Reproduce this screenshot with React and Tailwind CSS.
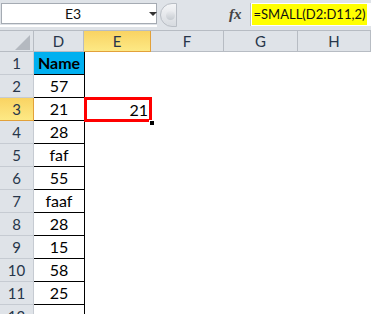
import React from "react";

const rows = [
  { n: 1, v: "Name" },
  { n: 2, v: "57" },
  { n: 3, v: "21" },
  { n: 4, v: "28" },
  { n: 5, v: "faf" },
  { n: 6, v: "55" },
  { n: 7, v: "faaf" },
  { n: 8, v: "28" },
  { n: 9, v: "15" },
  { n: 10, v: "58" },
  { n: 11, v: "25" },
  { n: 12, v: "" },
];

const font = { fontFamily: "Lato, 'Open Sans', sans-serif" };

export default function App() {
  return (
    <div className="w-[371px] h-[314px] overflow-hidden bg-white text-black" style={font}>
      {/* formula bar */}
      <div className="h-[30px] bg-[#dfe3e8] flex items-start relative">
        <div className="mt-[3px] ml-[1px] w-[156px] h-[21px] bg-white border border-[#a5abb3] flex items-center relative">
          <span className="absolute left-[63px] top-[1px] text-[14px] leading-[18px] text-[#111]">E3</span>
          <span className="absolute left-[147px] top-[8px] w-0 h-0 border-l-[4px] border-r-[4px] border-t-[4px] border-l-transparent border-r-transparent border-t-[#333]"></span>
        </div>
        <div className="absolute left-0 top-[25px] w-[157px] h-[2px] bg-white"></div>
        <div className="mt-[3px] ml-[3px] w-[17px] h-[24px] rounded-l-full border border-[#b9bec5] bg-gradient-to-b from-[#f4f5f7] to-[#d7dbe0] flex items-center justify-center">
          <div className="w-[9px] h-[9px] rounded-full bg-gradient-to-b from-[#e9ebee] to-[#c6cbd1] ml-[3px]"></div>
        </div>
        <div className="w-[52px]"></div>
        <span className="mt-[6px] text-[15px] leading-[16px] italic font-bold text-[#444]" style={{ fontFamily: "'Liberation Serif', serif" }}>fx</span>
        <div className="ml-[8px] mt-[3px] flex-1 h-[23px] bg-white border-l border-[#b9bec5] flex items-center">
          <span className="ml-[1px] bg-[#ffff00] h-[21px] px-[2px] text-[13px] leading-[21px] text-[#111]">=SMALL(D2:D11,2)</span>
        </div>
      </div>
      {/* column header */}
      <div className="flex h-[22px] border-t border-[#b7bcc3]">
        <div className="w-[34px] bg-[#dfe3e8] border-r border-b border-[#b7bcc3] relative">
          <svg className="absolute left-[15px] top-[4px]" width="15" height="15" viewBox="0 0 15 15"><polygon points="15,0 15,15 0,15" fill="#b4b9c0" /></svg>
        </div>
        <Head w="w-[50px]" t="D" />
        <div className="w-[67px] border-b border-r border-[#e2a13a] bg-gradient-to-b from-[#f9d362] to-[#fde985] flex items-center justify-center text-[15px] text-[#27364a]">E</div>
        <Head w="w-[73px]" t="F" />
        <Head w="w-[74px]" t="G" />
        <Head w="w-[73px]" t="H" />
      </div>
      {rows.map((r) => (
        <div key={r.n} className="flex h-[23px]">
          {r.n === 3 ? (
            <div className="w-[34px] shrink-0 border-r border-b border-[#e2a13a] bg-gradient-to-b from-[#f9d362] to-[#fde985] flex items-center justify-center text-[15px] text-[#27364a]">3</div>
          ) : (
            <div className="w-[34px] shrink-0 border-r border-b border-[#c6cbd2] bg-[#dfe3e8] flex items-center justify-center text-[15px] text-[#27364a]">{r.n}</div>
          )}
          {r.n <= 11 ? (
            r.n === 1 ? (
              <div className="w-[51px] shrink-0 border-r border-b border-black bg-[#00b0f0] flex items-center justify-center text-[16px] font-bold text-black">Name</div>
            ) : (
              <div className="w-[51px] shrink-0 border-r border-b border-black flex items-center justify-center text-[16px] text-black">{r.v}</div>
            )
          ) : (
            <div className="w-[51px] shrink-0 border-r border-black"></div>
          )}
          {r.n === 3 ? (
            <div className="w-[67px] shrink-0 relative">
              <div className="absolute left-[-1px] top-[-1px] w-[68px] h-[25px] border-[3px] border-[#ff0000] flex items-center justify-end pr-[1px] text-[16px]">21</div>
              <div className="absolute left-[64px] top-[22px] w-[4px] h-[4px] bg-black border border-white box-content"></div>
            </div>
          ) : (
            <div className="w-[67px] shrink-0"></div>
          )}
          <div className="flex-1"></div>
        </div>
      ))}
    </div>
  );
}

function Head({ w, t }) {
  return (
    <div className={`${w} shrink-0 border-b border-r border-[#b7bcc3] bg-[#dfe3e8] flex items-center justify-center text-[15px] text-[#27364a]`}>{t}</div>
  );
}
